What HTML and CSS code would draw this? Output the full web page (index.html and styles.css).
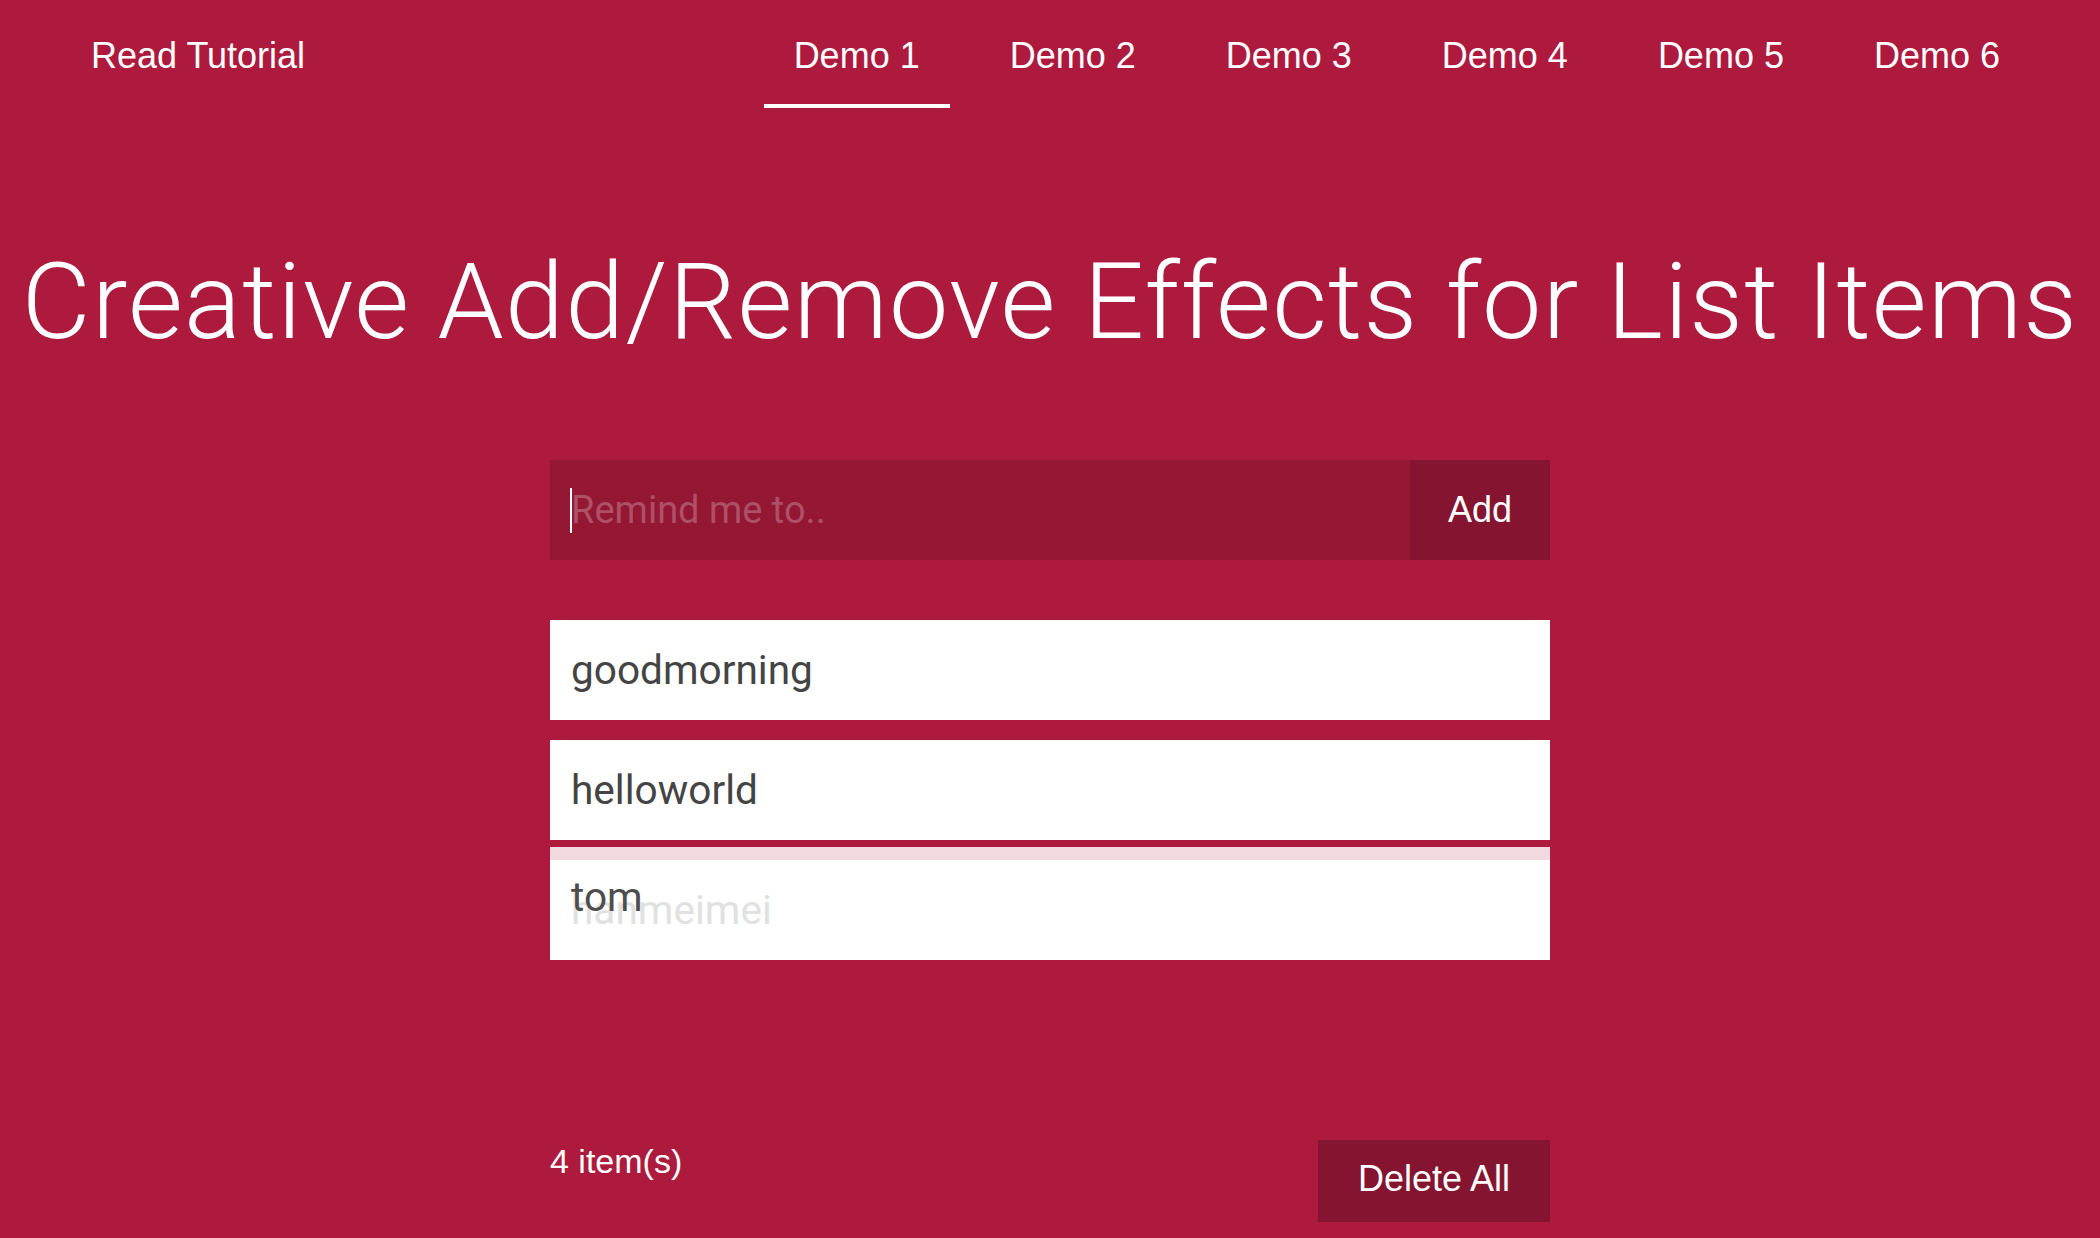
FILE: index.html
```html
<!DOCTYPE html>
<html lang="en">
<head>
<meta charset="utf-8">
<title>Creative Add/Remove Effects for List Items</title>
<link rel="stylesheet" href="styles.css">
</head>
<body>
<header class="topbar">
  <a class="nav-link" href="#">Read Tutorial</a>
  <nav class="demos">
    <a class="nav-link active" href="#">Demo 1</a>
    <a class="nav-link" href="#">Demo 2</a>
    <a class="nav-link" href="#">Demo 3</a>
    <a class="nav-link" href="#">Demo 4</a>
    <a class="nav-link" href="#">Demo 5</a>
    <a class="nav-link" href="#">Demo 6</a>
  </nav>
</header>
<main class="app">
  <h1 class="title">Creative Add/Remove Effects for List Items</h1>
  <form class="entry">
    <div class="field"><input class="field-input" type="text" placeholder="Remind me to.."></div>
    <button class="btn btn-add" type="button">Add</button>
  </form>
  <ul class="list">
    <li class="item">goodmorning</li>
    <li class="item">helloworld</li>
    <li class="item-transition">
      <div class="strip"></div>
      <div class="item-body"><span class="ghost">hanmeimei</span></div>
      <span class="incoming">tom</span>
    </li>
  </ul>
  <div class="footer">
    <span class="count">4 item(s)</span>
    <button class="btn btn-delete" type="button">Delete All</button>
  </div>
</main>
</body>
</html>
```

FILE: styles.css
```css
html, body {
  margin: 0;
  padding: 0;
}
body {
  background: #ad1a3e;
  color: #fff;
  font-family: "Liberation Sans", Arial, sans-serif;
  height: 1238px;
  overflow: hidden;
}
.topbar {
  display: flex;
  justify-content: space-between;
  align-items: flex-start;
  padding: 0 70px 0 61px;
  height: 108px;
}
.demos {
  display: flex;
  gap: 30px;
}
.nav-link {
  display: block;
  color: #fff;
  text-decoration: none;
  font-size: 36px;
  line-height: 40px;
  padding: 36px 30px 28px;
  border-bottom: 4px solid transparent;
}
.nav-link.active {
  border-bottom-color: #fff;
}
.app {
  width: 1000px;
  margin: 0 auto;
}
.title {
  margin: 131px -600px 0;
  text-align: center;
  font-family: Roboto, "Liberation Sans", sans-serif;
  font-weight: 300;
  font-size: 106px;
  letter-spacing: 1.3px;
  line-height: 127px;
  white-space: nowrap;
}
.entry {
  display: flex;
  margin-top: 94px;
  height: 100px;
}
.field {
  position: relative;
  flex: 1;
  background: #941734;
}
.field::after {
  content: "";
  position: absolute;
  left: 20px;
  top: 28px;
  width: 2px;
  height: 45px;
  background: #fff;
}
.field-input {
  display: block;
  width: 100%;
  height: 100px;
  box-sizing: border-box;
  border: 0;
  outline: 0;
  background: transparent;
  color: #fff;
  padding: 0 0 0 21px;
  font-family: Roboto, "Liberation Sans", sans-serif;
  font-size: 38px;
}
.field-input::placeholder {
  color: rgba(255, 255, 255, 0.25);
}
.btn {
  border: 0;
  color: #fff;
  background: #841430;
  font-family: "Liberation Sans", Arial, sans-serif;
  font-size: 36px;
  padding: 0;
  cursor: pointer;
}
.btn-add {
  width: 140px;
  height: 100px;
}
.list {
  list-style: none;
  margin: 60px 0 0;
  padding: 0;
  display: flex;
  flex-direction: column;
  gap: 20px;
}
.item, .item-body {
  background: #fff;
  color: #444;
  height: 100px;
  line-height: 100px;
  padding-left: 21px;
  font-family: Roboto, "Liberation Sans", sans-serif;
  font-size: 40.6px;
}
.item-transition {
  position: relative;
  margin-top: -13px;
}
.strip {
  height: 13px;
  background: #f2d8df;
}
.ghost {
  color: #e1e1e1;
}
.incoming {
  position: absolute;
  left: 21px;
  top: 0;
  line-height: 100px;
  font-family: Roboto, "Liberation Sans", sans-serif;
  font-size: 40.6px;
  color: #4d4d4d;
}
.footer {
  display: flex;
  justify-content: space-between;
  align-items: flex-start;
  margin-top: 180px;
}
.count {
  font-size: 34px;
  line-height: 38px;
  padding-top: 2px;
}
.btn-delete {
  height: 82px;
  line-height: 78px;
  padding: 0 40px 4px;
}
```
